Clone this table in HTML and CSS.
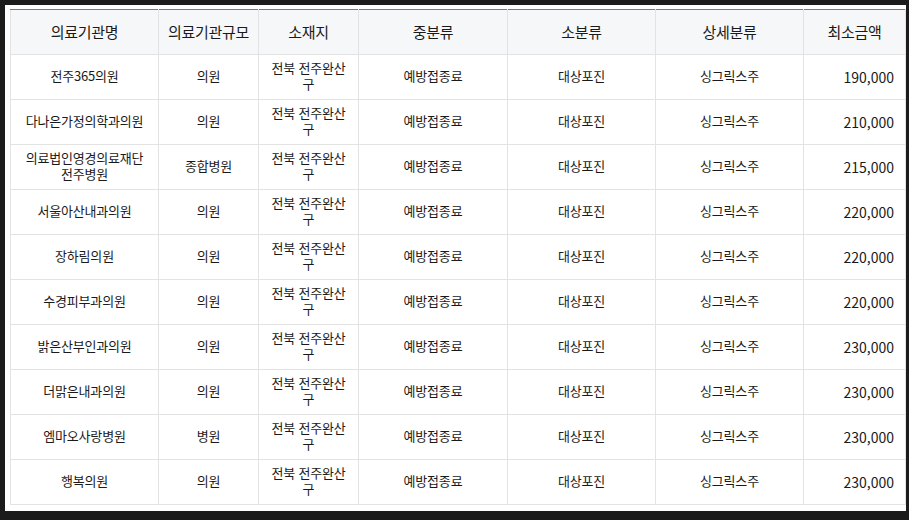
FILE: index.html
```html
<!DOCTYPE html>
<html lang="ko">
<head>
<meta charset="utf-8">
<link rel="stylesheet" href="styles.css">
</head>
<body>
<div class="frame">
  <table class="grid">
    <colgroup>
      <col class="c1"><col class="c2"><col class="c3"><col class="c4"><col class="c5"><col class="c6"><col class="c7">
    </colgroup>
    <thead>
      <tr><th>의료기관명</th><th>의료기관규모</th><th>소재지</th><th>중분류</th><th>소분류</th><th>상세분류</th><th>최소금액</th></tr>
    </thead>
    <tbody>
      <tr><td class="name">전주365의원</td><td>의원</td><td>전북 전주완산구</td><td>예방접종료</td><td>대상포진</td><td>싱그릭스주</td><td class="amt">190,000</td></tr>
      <tr><td class="name">다나은가정의학과의원</td><td>의원</td><td>전북 전주완산구</td><td>예방접종료</td><td>대상포진</td><td>싱그릭스주</td><td class="amt">210,000</td></tr>
      <tr><td class="name">의료법인영경의료재단전주병원</td><td>종합병원</td><td>전북 전주완산구</td><td>예방접종료</td><td>대상포진</td><td>싱그릭스주</td><td class="amt">215,000</td></tr>
      <tr><td class="name">서울아산내과의원</td><td>의원</td><td>전북 전주완산구</td><td>예방접종료</td><td>대상포진</td><td>싱그릭스주</td><td class="amt">220,000</td></tr>
      <tr><td class="name">장하림의원</td><td>의원</td><td>전북 전주완산구</td><td>예방접종료</td><td>대상포진</td><td>싱그릭스주</td><td class="amt">220,000</td></tr>
      <tr><td class="name">수경피부과의원</td><td>의원</td><td>전북 전주완산구</td><td>예방접종료</td><td>대상포진</td><td>싱그릭스주</td><td class="amt">220,000</td></tr>
      <tr><td class="name">밝은산부인과의원</td><td>의원</td><td>전북 전주완산구</td><td>예방접종료</td><td>대상포진</td><td>싱그릭스주</td><td class="amt">230,000</td></tr>
      <tr><td class="name">더맑은내과의원</td><td>의원</td><td>전북 전주완산구</td><td>예방접종료</td><td>대상포진</td><td>싱그릭스주</td><td class="amt">230,000</td></tr>
      <tr><td class="name">엠마오사랑병원</td><td>병원</td><td>전북 전주완산구</td><td>예방접종료</td><td>대상포진</td><td>싱그릭스주</td><td class="amt">230,000</td></tr>
      <tr><td class="name">행복의원</td><td>의원</td><td>전북 전주완산구</td><td>예방접종료</td><td>대상포진</td><td>싱그릭스주</td><td class="amt">230,000</td></tr>
    </tbody>
  </table>
</div>
</body>
</html>
```

FILE: styles.css
```css
html, body {
  margin: 0;
  padding: 0;
  background: #1b1b1b;
  height: 100%;
}
body {
  padding: 5px 3px 0 5px;
  box-sizing: border-box;
  font-family: "Noto Sans CJK KR", "Noto Sans", sans-serif;
  color: #1a1a1a;
}
.frame {
  width: 901px;
  height: 506px;
  background: #fff;
  box-sizing: border-box;
  padding: 4px 0 0 5px;
  overflow: hidden;
}
.grid {
  border-collapse: collapse;
  table-layout: fixed;
  width: 895px;
  border-top: 1px solid #7a7a7a;
}
.c1 { width: 148px; }
.c2 { width: 100px; }
.c3 { width: 100px; }
.c4 { width: 149px; }
.c5 { width: 148px; }
.c6 { width: 148px; }
.c7 { width: 102px; }
.grid th,
.grid td {
  border: 1px solid #e3e3e3;
  padding: 0 10px;
  text-align: center;
  vertical-align: middle;
  font-weight: normal;
  box-sizing: border-box;
}
.grid th {
  background: #f6f7f9;
  height: 45px;
  padding: 0 2px;
  white-space: nowrap;
  font-size: 15px;
  letter-spacing: -0.3px;
  line-height: 18px;
  border-top: 1px solid #7a7a7a;
}
.grid td {
  height: 45px;
  font-size: 13px;
  letter-spacing: -0.2px;
  line-height: 16px;
  padding-bottom: 2px;
}
.grid td.name {
  padding: 0 12px 2px;
}
.grid td.amt {
  text-align: right;
  font-size: 14px;
  letter-spacing: 0;
  padding: 0 11px 0 0;
}
```
